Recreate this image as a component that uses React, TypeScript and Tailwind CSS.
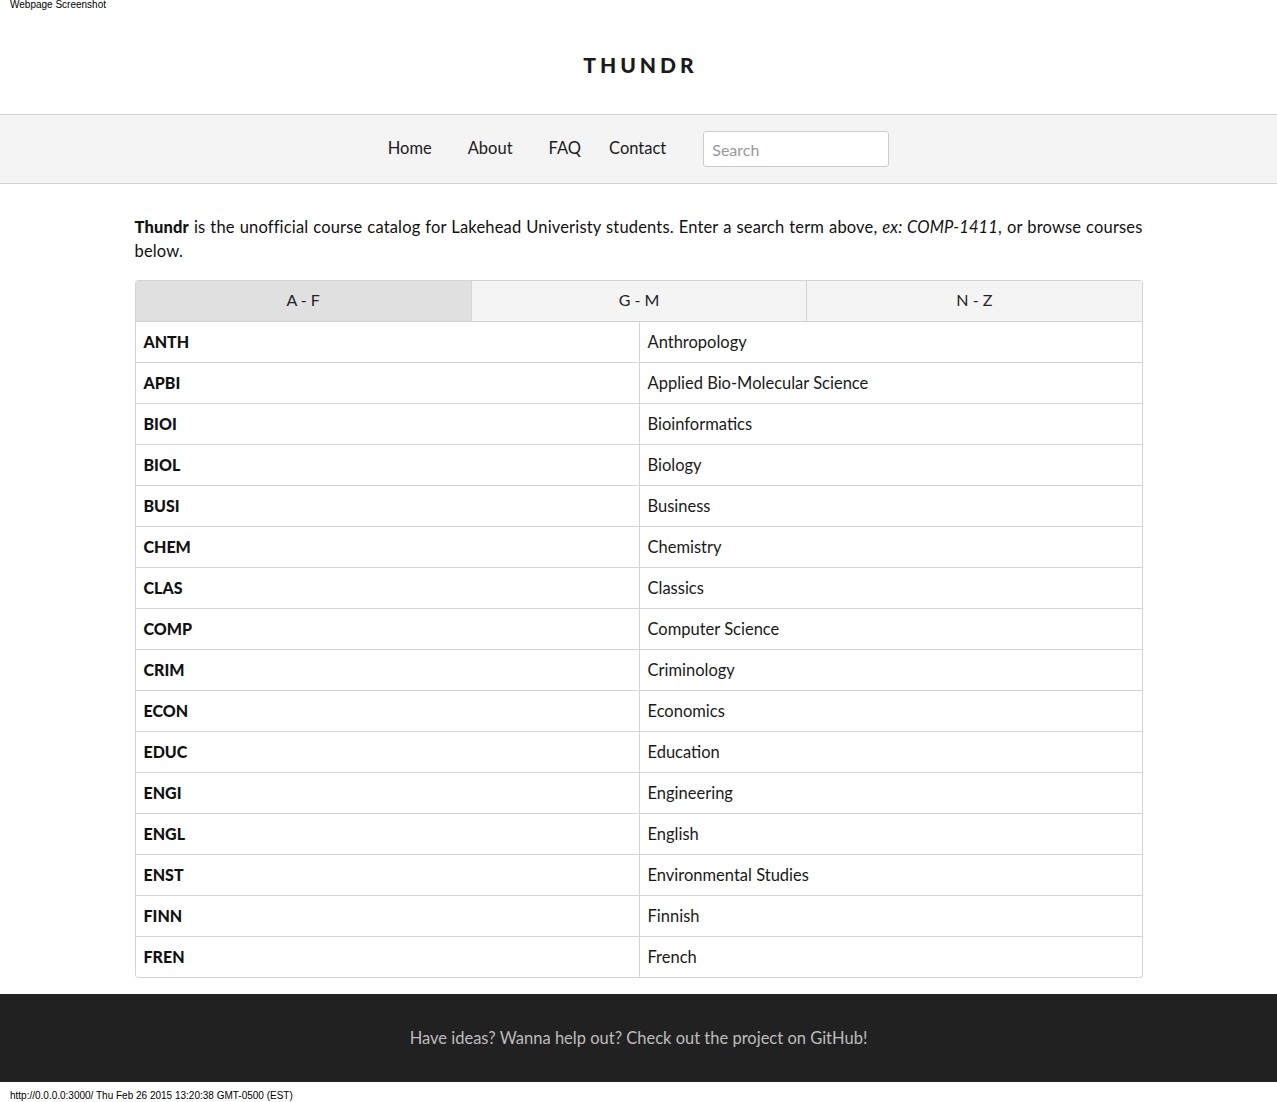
const subjects: [string, string][] = [
  ["ANTH", "Anthropology"],
  ["APBI", "Applied Bio-Molecular Science"],
  ["BIOI", "Bioinformatics"],
  ["BIOL", "Biology"],
  ["BUSI", "Business"],
  ["CHEM", "Chemistry"],
  ["CLAS", "Classics"],
  ["COMP", "Computer Science"],
  ["CRIM", "Criminology"],
  ["ECON", "Economics"],
  ["EDUC", "Education"],
  ["ENGI", "Engineering"],
  ["ENGL", "English"],
  ["ENST", "Environmental Studies"],
  ["FINN", "Finnish"],
  ["FREN", "French"],
];

const tabs = ["A - F", "G - M", "N - Z"];

export default function App() {
  return (
    <div className="min-h-[1102px] bg-white text-[#111] font-['Lato',sans-serif]">
      <div className="h-[20px] pl-[10px] text-[10px] leading-[10px] font-['Liberation_Sans',sans-serif] text-black">
        Webpage Screenshot
      </div>

      {/* header */}
      <header className="h-[94px] flex items-center justify-center pb-[4px]">
        <h1 className="text-[21px] font-black tracking-[0.19em] pl-[0.19em] text-[#1a1a1a]">
          THUNDR
        </h1>
      </header>

      {/* nav */}
      <nav className="h-[70px] bg-[#f4f4f4] border-y border-[#d4d4d4] flex items-center justify-center">
        <ul className="flex items-center text-[16.5px] text-[#1a1a1a]">
          <li className="mr-[36px] mb-[2px]">Home</li>
          <li className="mr-[36px] mb-[2px]">About</li>
          <li className="mr-[28px] mb-[2px]">FAQ</li>
          <li className="mr-[37px] mb-[2px]">Contact</li>
          <li>
            <input
              placeholder="Search"
              className="w-[186px] h-[36px] bg-white border border-[#ccc] rounded-[3px] px-[8px] text-[16px] placeholder:text-[#999] outline-none"
            />
          </li>
        </ul>
      </nav>

      <main className="w-[1008px] mx-auto pt-[31px] pb-[16px]">
        <p className="text-[16.5px] leading-[24px] text-justify tracking-[0.01em]">
          <strong className="font-black">Thundr</strong> is the unofficial course catalog for
          Lakehead Univeristy students. Enter a search term above, <em>ex: COMP-1411</em>, or
          browse courses below.
        </p>

        <div className="mt-[17px] border border-[#d4d4d4] rounded-[3px]">
          <div className="grid grid-cols-3 h-[41px] border-b border-[#d4d4d4]">
            {tabs.map((t, i) => (
              <div
                key={t}
                className={
                  "flex items-center justify-center text-[16px] text-[#222] pb-[2px] " +
                  (i === 0 ? "bg-[#e0e0e0]" : "bg-[#f4f4f4] border-l border-[#d4d4d4]")
                }
              >
                {t}
              </div>
            ))}
          </div>
          <div className="flex flex-col">
            {subjects.map(([code, name], i) => (
              <div
                key={code}
                className={
                  "grid grid-cols-[504px_1fr] " +
                  (i > 0 ? "h-[41px] border-t border-[#d4d4d4]" : "h-[40px]")
                }
              >
                <div className="flex items-center px-[8px] font-black text-[16px] text-[#111] border-r border-[#d4d4d4]">
                  {code}
                </div>
                <div className="flex items-center px-[8px] text-[16.5px] text-[#1a1a1a]">
                  {name}
                </div>
              </div>
            ))}
          </div>
        </div>
      </main>

      <footer className="h-[88px] bg-[#212121] flex items-center justify-center">
        <p className="text-[16.5px] text-[#bdbdbd]">
          Have ideas? Wanna help out? Check out the project on GitHub!
        </p>
      </footer>
      <div className="h-[20px] pl-[10px] pt-[9px] text-[10px] leading-[10px] font-['Liberation_Sans',sans-serif] text-black">
        http://0.0.0.0:3000/ Thu Feb 26 2015 13:20:38 GMT-0500 (EST)
      </div>
    </div>
  );
}
